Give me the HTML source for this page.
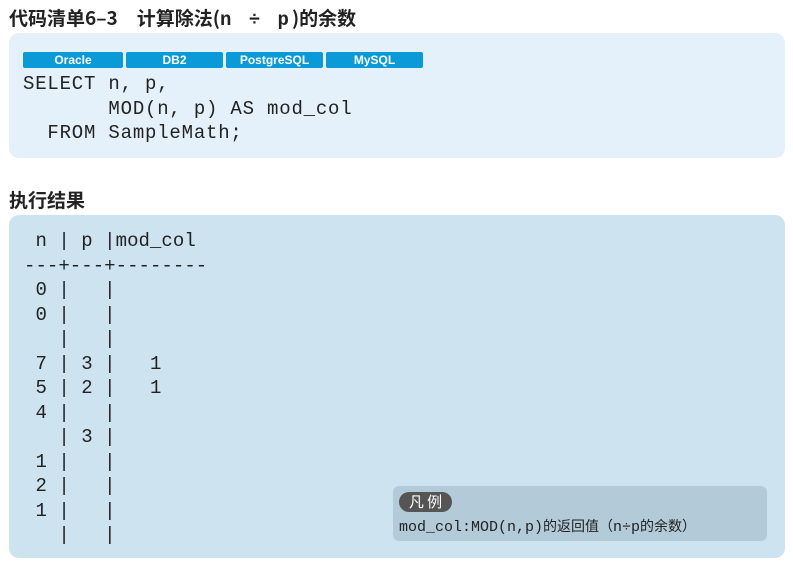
<!DOCTYPE html>
<html><head><meta charset="utf-8"><style>
body{margin:0;width:793px;height:568px;background:#fff;position:relative;overflow:hidden;font-family:"Liberation Sans","Noto Sans CJK SC",sans-serif}
.h{position:absolute;left:9px;font-weight:bold;font-size:19px;color:#222;font-family:"Noto Sans CJK SC","Liberation Sans",sans-serif}
.box{position:absolute;left:9px;width:776px;border-radius:10px}
pre{margin:0;position:absolute;font-family:"Liberation Mono",monospace;font-size:19px;color:#222;letter-spacing:0}
.b{position:absolute;top:52px;height:16px;background:#0a9ad8;color:#fff;font-weight:bold;font-size:12px;text-align:center;line-height:16px;border-radius:2px}
</style></head><body>
<div class="h" style="top:4px">代码清单6–3　计算除法(<span style="font-family:'Liberation Mono',monospace;letter-spacing:3px">n ÷ p</span>)的余数</div>
<div class="box" style="top:33px;height:125px;background:#e4f1fa"></div>
<div class="b" style="left:23px;width:100px">Oracle</div>
<div class="b" style="left:126px;width:97px">DB2</div>
<div class="b" style="left:226px;width:97px">PostgreSQL</div>
<div class="b" style="left:326px;width:97px">MySQL</div>
<pre style="left:23px;top:72px;line-height:24.5px;letter-spacing:0.8px">SELECT n, p,
       MOD(n, p) AS mod_col
  FROM SampleMath;</pre>
<div class="h" style="top:186px">执行结果</div>
<div class="box" style="top:215px;height:343px;background:#cde3f0"></div>
<pre style="left:24px;top:229px;line-height:24.5px;letter-spacing:0.05px"> n | p |mod_col
---+---+--------
 0 |   |
 0 |   |
   |   |
 7 | 3 |   1
 5 | 2 |   1
 4 |   |
   | 3 |
 1 |   |
 2 |   |
 1 |   |
   |   |</pre>
<div style="position:absolute;left:393px;top:486px;width:374px;height:55px;background:#b3cad8;border-radius:6px"></div>
<div style="position:absolute;left:399px;top:492px;width:53px;height:20px;background:#555;border-radius:10px;color:#fff;font-size:15px;line-height:20px;text-align:center;font-family:'Noto Sans CJK SC',sans-serif">凡 例</div>
<div style="position:absolute;left:399px;top:516px;font-size:14px;color:#222;white-space:nowrap;font-family:'Noto Sans CJK SC',sans-serif"><span style="font-family:'Liberation Mono',monospace;font-size:15px">mod_col:MOD(n,p)</span>的返回值（<span style="font-family:'Liberation Mono',monospace;font-size:15px">n÷p</span>的余数）</div>
</body></html>
